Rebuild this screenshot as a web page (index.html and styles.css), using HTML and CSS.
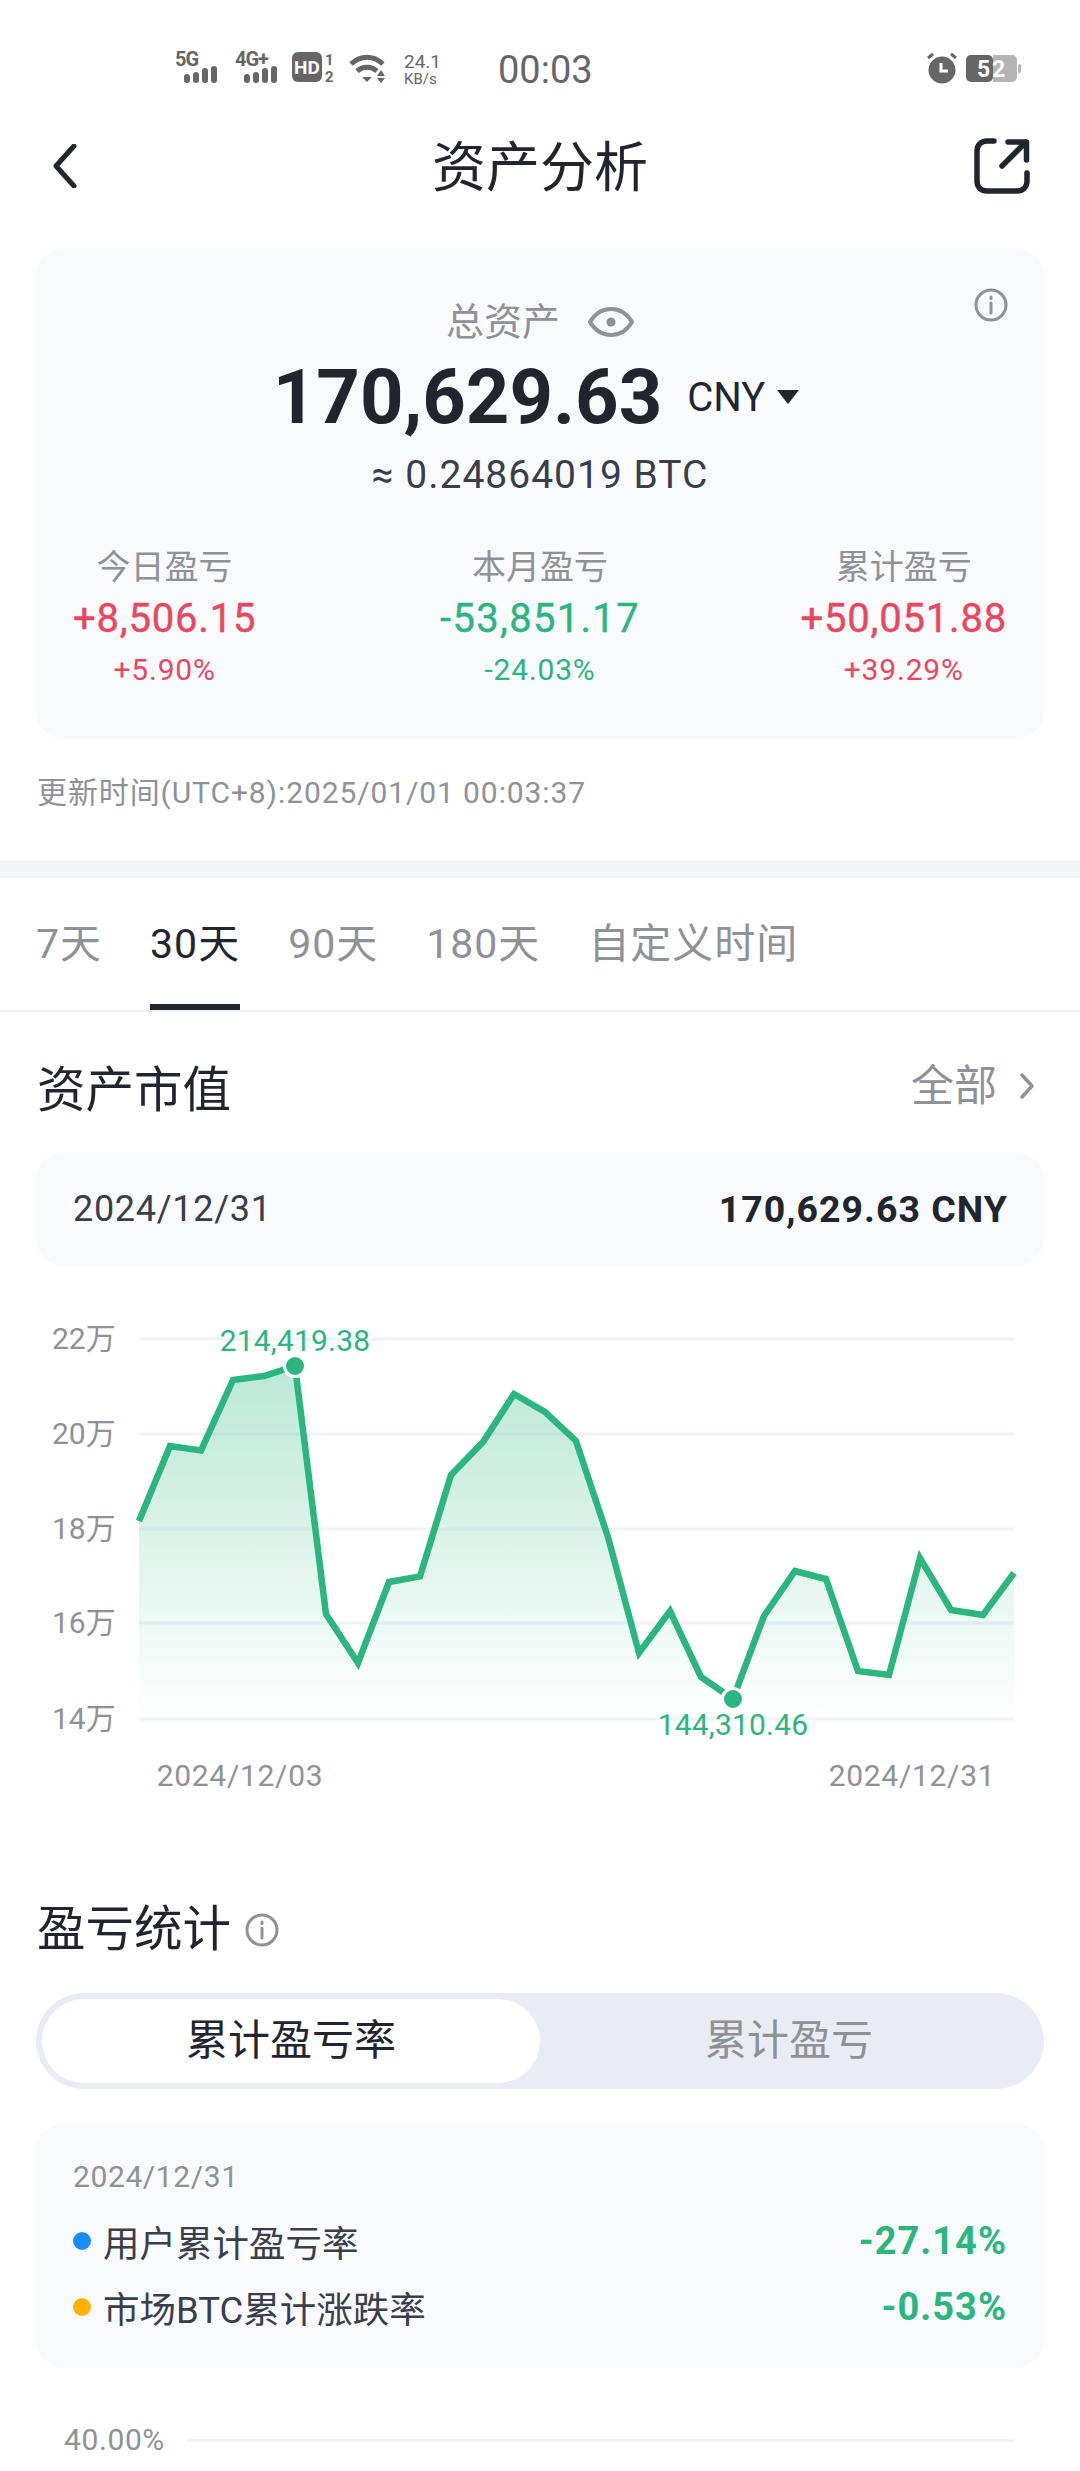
FILE: index.html
```html
<!DOCTYPE html>
<html lang="zh-CN">
<head>
<meta charset="utf-8">
<title>资产分析</title>
<link rel="stylesheet" href="styles.css">
</head>
<body>
<div class="page">
  <div class="status">
    <svg class="ic-signal" viewBox="0 -4 44 40"><text x="0" y="14" class="sb-net">5G</text><rect x="9" y="22" width="6" height="9" rx="3"/><rect x="18" y="20" width="6" height="11" rx="3"/><rect x="27" y="16" width="6" height="15" rx="3"/><rect x="36" y="14" width="6" height="17" rx="3"/></svg>
    <svg class="ic-signal ic-signal-2" viewBox="0 -4 44 40"><text x="0" y="14" class="sb-net">4G+</text><rect x="9" y="22" width="6" height="9" rx="3"/><rect x="18" y="20" width="6" height="11" rx="3"/><rect x="27" y="16" width="6" height="15" rx="3"/><rect x="36" y="14" width="6" height="17" rx="3"/></svg>
    <svg class="ic-hd" viewBox="0 -4 44 40"><rect x="0" y="0" width="30" height="30" rx="6"/><text x="15" y="22" class="sb-hd">HD</text><text x="33" y="13" class="sb-sim">1</text><text x="33" y="30" class="sb-sim">2</text></svg>
    <svg class="ic-wifi" viewBox="0 0 38 32"><path d="M2 12C12 3 24 3 34 12" class="wifi-arc"/><path d="M8 19c6-5 14-5 20 0" class="wifi-arc"/><path d="M13 25h10l-5 5z" class="wifi-fill"/><path d="M32 18l4 6h-8zM28 26h8l-4 5z" class="wifi-fill"/></svg>
    <div class="speed"><span class="speed-num">24.1</span><span class="speed-unit">KB/s</span></div>
    <span class="clock">00:03</span>
    <div class="status-right">
      <svg class="ic-alarm" viewBox="0 0 30 32"><circle cx="15" cy="18" r="13.5" class="alarm-face"/><path d="M1 6l5-4M29 6l-5-4" class="alarm-ear"/><path d="M14 11v8h7" class="alarm-hand"/></svg>
      <svg class="ic-batt" viewBox="0 0 56 28"><rect x="0" y="0" width="27" height="27" rx="5" class="batt-a"/><path d="M27 0h19a5 5 0 0 1 5 5v17a5 5 0 0 1-5 5H27z" class="batt-b"/><rect x="52" y="9" width="3" height="9" rx="1.5" class="batt-b"/><text x="11" y="22" class="batt-t">5</text><text x="26" y="22" class="batt-t">2</text></svg>
    </div>
  </div>

  <header class="nav">
    <svg class="ic-back" viewBox="0 0 26 44"><path d="M22 2L4 22l18 20"/></svg>
    <h1 class="nav-title">资产分析</h1>
    <svg class="ic-share" viewBox="0 0 56 56"><path d="M20 3H13C7 3 3 7 3 13v30c0 6 4 10 10 10h30c6 0 10-4 10-10v-8"/><path d="M28 28L52 4M34 4h18.500v18"/></svg>
  </header>

  <section class="card summary">
    <svg class="ic-info info-top" viewBox="0 0 34 34"><circle cx="17" cy="17" r="15"/><path d="M17 15v10M17 9v1.500"/></svg>
    <div class="total-label"><span>总资产</span>
      <svg class="ic-eye" viewBox="0 0 46 32"><path d="M2 16C8 6 15 3 23 3s15 3 21 13c-6 10-13 13-21 13S8 26 2 16z"/><circle cx="23" cy="16" r="4.500" class="eye-pupil"/></svg>
    </div>
    <div class="total-row"><span class="total-num">170,629.63</span><span class="total-cur">CNY</span><span class="total-caret"></span></div>
    <div class="total-btc">≈ 0.24864019 BTC</div>
    <div class="stats">
      <div class="stat stat-l"><div class="stat-label">今日盈亏</div><div class="stat-value up">+8,506.15</div><div class="stat-pct up">+5.90%</div></div>
      <div class="stat"><div class="stat-label">本月盈亏</div><div class="stat-value down">-53,851.17</div><div class="stat-pct down">-24.03%</div></div>
      <div class="stat stat-r"><div class="stat-label">累计盈亏</div><div class="stat-value up">+50,051.88</div><div class="stat-pct up">+39.29%</div></div>
    </div>
  </section>
  <div class="updated">更新时间(UTC+8):2025/01/01 00:03:37</div>
  <div class="band"></div>

  <nav class="tabs">
    <span class="tab">7天</span>
    <span class="tab tab-on">30天</span>
    <span class="tab">90天</span>
    <span class="tab">180天</span>
    <span class="tab">自定义时间</span>
  </nav>

  <div class="sec-head">
    <h2 class="sec-title">资产市值</h2>
    <div class="sec-more"><span>全部</span><svg class="ic-more" viewBox="0 0 16 26"><path d="M3 2l10 11L3 24"/></svg></div>
  </div>
  <div class="card quote">
    <span class="quote-date">2024/12/31</span>
    <span class="quote-val">170,629.63 CNY</span>
  </div>

  <svg class="chart" viewBox="0 1300 1080 520">
    <defs>
      <linearGradient id="area" x1="0" y1="1365" x2="0" y2="1719" gradientUnits="userSpaceOnUse">
        <stop offset="0" stop-color="#2bb57f" stop-opacity=".32"/>
        <stop offset="1" stop-color="#2bb57f" stop-opacity="0"/>
      </linearGradient>
    </defs>
    <g class="grid">
      <line x1="139" x2="1014" y1="1339" y2="1339"/><line x1="139" x2="1014" y1="1434" y2="1434"/><line x1="139" x2="1014" y1="1529" y2="1529"/><line x1="139" x2="1014" y1="1623" y2="1623"/><line x1="139" x2="1014" y1="1719" y2="1719"/>
    </g>
    <polygon class="area" points="139,1521 170,1446 201,1450.500 233,1380 264,1376 295,1366 326,1614 358,1663 389,1582 420,1576.500 451,1475 483,1442 514,1394 545,1412 576,1441 608,1537 639,1653 670,1611 701,1677 733,1699 764,1616 795,1571 826,1579 858,1671 889,1675 920,1558 951,1610 983,1615 1014,1573 1014,1719 139,1719"/>
    <polyline class="line" points="139,1521 170,1446 201,1450.500 233,1380 264,1376 295,1366 326,1614 358,1663 389,1582 420,1576.500 451,1475 483,1442 514,1394 545,1412 576,1441 608,1537 639,1653 670,1611 701,1677 733,1699 764,1616 795,1571 826,1579 858,1671 889,1675 920,1558 951,1610 983,1615 1014,1573"/>
    <circle class="dot" cx="295" cy="1366" r="10.500"/>
    <circle class="dot" cx="733" cy="1699" r="10.500"/>
    <g class="axis-y">
      <text x="52" y="1349">22万</text><text x="52" y="1444">20万</text><text x="52" y="1539">18万</text><text x="52" y="1633">16万</text><text x="52" y="1729">14万</text>
    </g>
    <text class="peak" x="295" y="1351">214,419.38</text>
    <text class="peak" x="733" y="1735">144,310.46</text>
    <text class="axis-x" x="240" y="1786">2024/12/03</text>
    <text class="axis-x" x="912" y="1786">2024/12/31</text>
  </svg>

  <div class="sec-head sec-pnl">
    <h2 class="sec-title">盈亏统计</h2>
    <svg class="ic-info info-title" viewBox="0 0 34 34"><circle cx="17" cy="17" r="15"/><path d="M17 15v10M17 9v1.500"/></svg>
  </div>
  <div class="toggle">
    <div class="toggle-item toggle-on">累计盈亏率</div>
    <div class="toggle-item">累计盈亏</div>
  </div>
  <div class="card legend">
    <div class="legend-date">2024/12/31</div>
    <div class="legend-row"><i class="bullet bullet-blue"></i><span class="legend-name">用户累计盈亏率</span><b class="legend-val">-27.14%</b></div>
    <div class="legend-row"><i class="bullet bullet-amber"></i><span class="legend-name">市场BTC累计涨跌率</span><b class="legend-val">-0.53%</b></div>
  </div>
  <div class="rate-axis"><span>40.00%</span><i class="rate-line"></i></div>
</div>
</body>
</html>
```

FILE: styles.css
```css
* { box-sizing: border-box; }
html, body { margin: 0; padding: 0; background: #fff; }
body { font-family: Roboto, "Noto Sans CJK SC", sans-serif; color: #22252e; }
.page { width: 1080px; height: 2471px; overflow: hidden; display: flex; flex-direction: column; }
h1, h2 { margin: 0; font-weight: 400; }

/* status bar */
.status { height: 110px; padding: 52px 58px 0 175px; display: flex; align-items: flex-start; }
.status svg { display: block; fill: #666; }
.ic-signal { width: 44px; height: 40px; margin: -4px 16px 0 0; }
.ic-signal-2 { margin-right: 13px; }
.ic-hd { width: 44px; height: 40px; margin: -4px 13px 0 0; }
.ic-wifi { width: 38px; height: 32px; margin-right: 17px; }
.sb-net { font: 700 20px Roboto, sans-serif; letter-spacing: -1px; }
.sb-hd { font: 700 19px Roboto, sans-serif; fill: #fff; text-anchor: middle; }
.sb-sim { font: 700 15px Roboto, sans-serif; }
.wifi-arc { fill: none; stroke: #666; stroke-width: 5; }
.speed { display: flex; flex-direction: column; width: 94px; color: #666; padding-top: 1px; }
.speed-num { font-size: 19px; line-height: 18px; }
.speed-unit { font-size: 15px; line-height: 17px; }
.clock { font-size: 38px; line-height: 36px; color: #666; }
.status-right { margin-left: auto; display: flex; gap: 9px; align-items: flex-start; }
.ic-alarm { width: 30px; height: 32px; }
.alarm-ear { stroke: #666; stroke-width: 3; fill: none; }
.alarm-hand { stroke: #fff; stroke-width: 3; fill: none; }
.ic-batt { width: 56px; height: 28px; margin-top: 3px; }
.batt-a { fill: #666; }
.batt-b { fill: #b4b4b4; }
.batt-t { font: 700 23px Roboto, sans-serif; fill: #fff; }

/* nav */
.nav { height: 112px; padding: 0 50px 0 52px; display: flex; align-items: center; justify-content: space-between; position: relative; }
.nav-title { position: absolute; left: 0; right: 0; top: 3px; text-align: center; font-size: 54px; line-height: 112px; }
.ic-back { width: 26px; height: 44px; fill: none; stroke: #22252e; stroke-width: 5; stroke-linecap: round; stroke-linejoin: round; }
.ic-share { width: 56px; height: 56px; fill: none; stroke: #22252e; stroke-width: 5.500; stroke-linecap: round; stroke-linejoin: round; }

/* cards */
.card { background: #f8fafb; border-radius: 28px; margin: 0 36px; }
.summary { margin-top: 26px; height: 491px; padding: 52px 37px 0; display: flex; flex-direction: column; align-items: center; position: relative; flex: none; }
.ic-info { fill: none; stroke: #8e9196; stroke-width: 3; stroke-linecap: round; }
.info-top { position: absolute; right: 36px; top: 40px; width: 34px; height: 34px; }
.total-label { display: flex; align-items: center; gap: 28px; font-size: 38px; line-height: 44px; color: #8e9196; }
.ic-eye { width: 46px; height: 32px; fill: none; stroke: #8e9196; stroke-width: 4; }
.eye-pupil { fill: #8e9196; stroke: none; }
.total-row { display: flex; align-items: center; margin: 11px 0 0 -8px; height: 84px; }
.total-num { font-size: 76px; font-weight: 700; }
.total-cur { font-size: 40px; margin-left: 25px; }
.total-caret { width: 0; height: 0; margin-left: 12px; border-left: 11px solid transparent; border-right: 11px solid transparent; border-top: 14px solid #22252e; }
.total-btc { margin-top: 14px; font-size: 39px; line-height: 44px; color: #3a3e4a; letter-spacing: 1px; }
.stats { width: 100%; margin-top: 50px; display: grid; grid-template-columns: 1fr auto 1fr; }
.stat { display: flex; flex-direction: column; align-items: center; }
.stat-l { justify-self: start; }
.stat-r { justify-self: end; }
.stat-label { font-size: 34px; line-height: 40px; color: #8e9196; }
.stat-value { font-size: 40px; font-weight: 400; -webkit-text-stroke: .4px currentColor; line-height: 48px; margin-top: 8px; letter-spacing: .8px; }
.stat-value.down { letter-spacing: 1.300px; }
.stat-pct { font-size: 30px; line-height: 36px; margin-top: 9px; letter-spacing: .8px; }
.up { color: #e8475f; }
.down { color: #2bb57f; }
.updated { margin: 34px 0 0 37px; font-size: 30px; line-height: 40px; color: #8e9196; letter-spacing: .9px; }
.band { height: 17px; margin-top: 48px; background: #f4f5f6; flex: none; }

/* tabs */
.tabs { flex: none; display: flex; padding-left: 36px; gap: 48px; border-bottom: 2px solid #eeeff1; }
.tab { position: relative; font-size: 41px; line-height: 132px; height: 132px; color: #8e9196; letter-spacing: 1px; }
.tab-on { color: #22252e; }
.tab-on::after { content: ""; position: absolute; left: 0; right: 0; bottom: 0; height: 6px; background: #22252e; }

/* sections */
.sec-head { display: flex; align-items: center; justify-content: space-between; padding: 0 36px 0 37px; height: 64px; margin-top: 47px; flex: none; }
.sec-title { font-size: 48.500px; line-height: 64px; }
.sec-more { display: flex; align-items: center; gap: 22px; font-size: 43px; line-height: 56px; color: #8e9196; margin: -10px 0 0; padding-right: 9px; }
.ic-more { width: 16px; height: 26px; fill: none; stroke: #8e9196; stroke-width: 3.500; stroke-linecap: round; stroke-linejoin: round; }
.quote { margin-top: 29px; height: 114px; padding: 0 36px 0 37px; display: flex; align-items: center; justify-content: space-between; flex: none; }
.quote-date { font-size: 36px; color: #3a3e4a; letter-spacing: .7px; }
.quote-val { font-size: 37.500px; font-weight: 700; letter-spacing: 1px; }

/* chart */
.chart { display: block; width: 1080px; height: 520px; margin-top: 34px; flex: none; }
.grid line { stroke: #f0f2f6; stroke-width: 3; }
.area { fill: url(#area); }
.line { fill: none; stroke: #2bb57f; stroke-width: 6.500; stroke-linejoin: miter; }
.dot { fill: #2bb57f; stroke: #fff; stroke-width: 3; }
.axis-y text { font: 400 30px Roboto, "Noto Sans CJK SC", sans-serif; fill: #8e9196; }
.peak { font: 400 30px Roboto, sans-serif; fill: #2bb57f; text-anchor: middle; letter-spacing: .2px; }
.axis-x { font: 400 30px Roboto, sans-serif; fill: #8e9196; text-anchor: middle; letter-spacing: .7px; }

/* pnl */
.sec-pnl { justify-content: flex-start; gap: 14px; margin-top: 78px; }
.info-title { width: 34px; height: 34px; }
.toggle { margin: 31px 36px 0; height: 96px; padding: 6px; border-radius: 48px; background: #e9ecf2; display: flex; flex: none; }
.toggle-item { flex: 1; text-align: center; font-size: 42px; line-height: 84px; color: #8e9196; border-radius: 42px; }
.toggle-on { background: #fff; color: #22252e; }
.legend { margin-top: 35px; height: 244px; padding: 34px 37px 0; flex: none; }
.legend-date { font-size: 30px; line-height: 38px; color: #8e9196; letter-spacing: .6px; }
.legend-row { display: flex; align-items: center; height: 66px; }
.legend-date + .legend-row { margin-top: 12px; }
.bullet { width: 18px; height: 18px; border-radius: 50%; margin-right: 12px; }
.bullet-blue { background: #1b8cff; }
.bullet-amber { background: #ffb300; }
.legend-name { font-size: 36.500px; color: #3a3e4a; }
.legend-val { margin-left: auto; font-size: 38px; font-weight: 700; color: #2bb57f; letter-spacing: 1px; }
.rate-axis { display: flex; align-items: center; padding: 0 65px 0 64px; margin-top: 52px; font-size: 30px; line-height: 40px; color: #8e9196; gap: 22px; letter-spacing: .6px; }
.rate-line { flex: 1; height: 3px; background: #f1f2f4; }
```
